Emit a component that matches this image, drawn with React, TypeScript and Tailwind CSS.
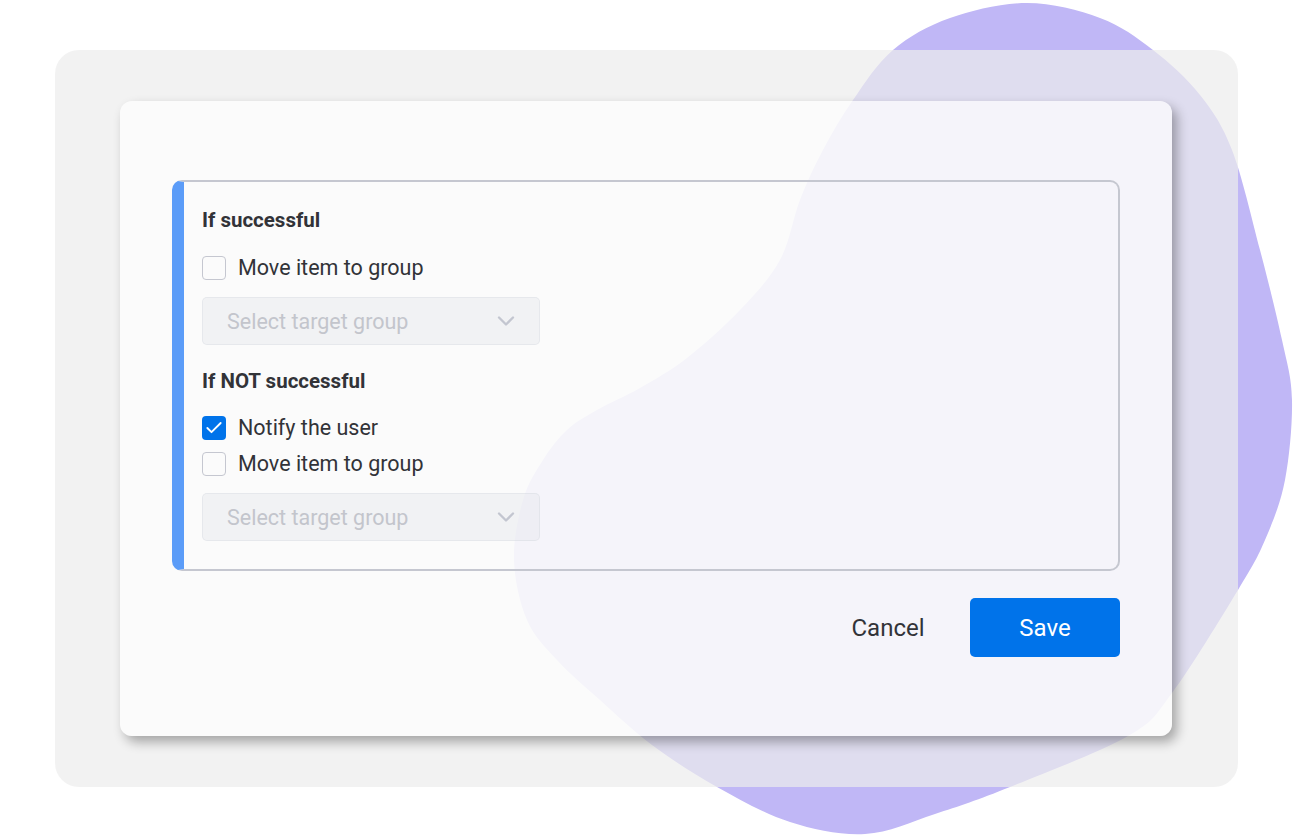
import { ChevronDown, Check } from 'lucide-react';

const blobPoints: [number, number][] = [
  [1027, 3], [1100, 18], [1153, 50], [1200, 95], [1232, 150], [1260, 250], [1282, 340],
  [1292, 400], [1285, 480], [1265, 540], [1238, 590], [1172, 693], [1128, 736],
  [1010, 787], [935, 814], [865, 834], [790, 822], [717, 787],
  [652, 745], [600, 700], [557, 660], [527, 620], [514, 560], [523, 500], [543, 460],
  [567, 430], [597, 410], [640, 388], [687, 358], [740, 310], [780, 260], [800, 200],
  [823, 150], [853, 100], [893, 50], [950, 18],
];

function smoothPath(pts: [number, number][]) {
  const n = pts.length;
  let d = `M${pts[0][0]},${pts[0][1]}`;
  for (let i = 0; i < n; i++) {
    const p0 = pts[(i - 1 + n) % n];
    const p1 = pts[i];
    const p2 = pts[(i + 1) % n];
    const p3 = pts[(i + 2) % n];
    const c1x = p1[0] + (p2[0] - p0[0]) / 6;
    const c1y = p1[1] + (p2[1] - p0[1]) / 6;
    const c2x = p2[0] - (p3[0] - p1[0]) / 6;
    const c2y = p2[1] - (p3[1] - p1[1]) / 6;
    d += ` C${c1x},${c1y} ${c2x},${c2y} ${p2[0]},${p2[1]}`;
  }
  return d + 'Z';
}

function Checkbox({ checked }: { checked?: boolean }) {
  if (checked) {
    return (
      <span className="w-6 h-6 rounded-[4px] bg-[#0073ea] flex items-center justify-center flex-shrink-0">
        <Check className="w-5 h-5 text-white" strokeWidth={2.2} />
      </span>
    );
  }
  return <span className="w-6 h-6 rounded-[4px] border-[1.5px] border-[#c5c7d0] flex-shrink-0"></span>;
}

function Option({ label, checked }: { label: string; checked?: boolean }) {
  return (
    <div className="flex items-center gap-3 h-6">
      <Checkbox checked={checked} />
      <span className="text-[21.5px] text-[#323338] leading-6">{label}</span>
    </div>
  );
}

function Dropdown() {
  return (
    <div className="w-[338px] h-12 rounded-[5px] bg-[rgba(228,230,236,0.4)] border border-[rgba(205,208,218,0.35)] flex items-center justify-between pl-6 pr-[19px] pt-[3px]">
      <span className="text-[21.5px] text-[#c3c5cc]">Select target group</span>
      <ChevronDown className="w-7 h-7 text-[#c3c6d0] -mt-[3px]" strokeWidth={2} />
    </div>
  );
}

export default function App() {
  return (
    <div
      className="relative w-[1294px] h-[835px] bg-white overflow-hidden pt-[50px] pl-[55px]"
      style={{ fontFamily: 'Roboto, "Liberation Sans", sans-serif' }}
    >
      <svg className="absolute inset-0" width="1294" height="835" viewBox="0 0 1294 835">
        <path d={smoothPath(blobPoints)} fill="#c0b7f6" />
      </svg>

      <div className="relative w-[1183px] h-[737px] rounded-[24px] bg-[rgba(236,236,236,0.7)] pt-[51px] pl-[65px]">
        <div className="w-[1052px] h-[635px] rounded-[12px] bg-[rgba(255,255,255,0.68)] shadow-[5px_6px_12px_rgba(0,0,0,0.32)] pt-[79px] px-[52px]">
          <div className="h-[391px] rounded-[10px] border-2 border-[#c5c7d0] border-l-[12px] border-l-[#5b9cf8] pl-[18px] pt-[26px]">
            <h3 className="text-[20.5px] font-bold text-[#323338] leading-6">If successful</h3>
            <div className="mt-6">
              <Option label="Move item to group" />
            </div>
            <div className="mt-[17px]">
              <Dropdown />
            </div>

            <h3 className="mt-6 text-[20.5px] font-bold text-[#323338] leading-6">If NOT successful</h3>
            <div className="mt-[23px] flex flex-col gap-3">
              <Option label="Notify the user" checked />
              <Option label="Move item to group" />
            </div>
            <div className="mt-[17px]">
              <Dropdown />
            </div>
          </div>

          <div className="mt-[27px] flex justify-end gap-[23px]">
            <button className="w-[118px] h-[59px] text-[24px] text-[#323338]">Cancel</button>
            <button className="w-[150px] h-[59px] rounded-[5px] bg-[#0073ea] text-[24px] text-white">Save</button>
          </div>
        </div>
      </div>
    </div>
  );
}
